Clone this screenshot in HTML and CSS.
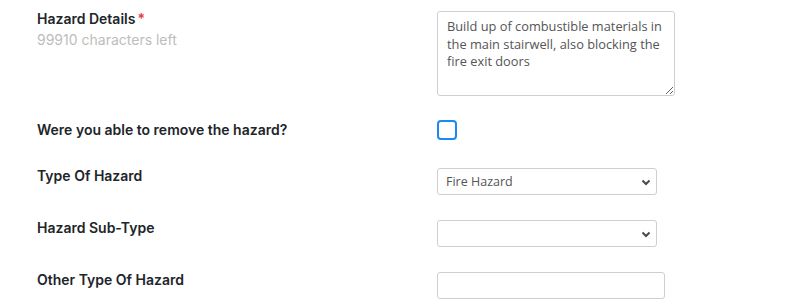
FILE: index.html
```html
<!DOCTYPE html>
<html lang="en">
<head>
  <meta charset="UTF-8" />
  <title>Report Hazard</title>
  <link rel="stylesheet" href="styles.css">
</head>
<body>
  <form class="hazard-form">
    <div class="form-row">
      <div class="label-col">
        <label class="field-label" for="details">Hazard Details<span class="required">*</span></label>
        <div class="char-count">99910 characters left</div>
      </div>
      <textarea id="details" class="field textarea">Build up of combustible materials in the main stairwell, also blocking the fire exit doors</textarea>
    </div>

    <div class="form-row row-center">
      <label class="field-label" for="removed">Were you able to remove the hazard?</label>
      <input type="checkbox" id="removed" class="check">
    </div>

    <div class="form-row">
      <label class="field-label" for="type">Type Of Hazard</label>
      <div class="select-wrap">
        <select id="type" class="field select">
          <option>Fire Hazard</option>
          <option>Trip Hazard</option>
          <option>Electrical Hazard</option>
        </select>
        <svg class="chevron" width="10" height="7" viewBox="0 0 10 7"><path d="M1.5 1.5 L5 5 L8.5 1.5" fill="none" stroke="#4a4a4a" stroke-width="2"/></svg>
      </div>
    </div>

    <div class="form-row">
      <label class="field-label" for="subtype">Hazard Sub-Type</label>
      <div class="select-wrap">
        <select id="subtype" class="field select">
          <option></option>
        </select>
        <svg class="chevron" width="10" height="7" viewBox="0 0 10 7"><path d="M1.5 1.5 L5 5 L8.5 1.5" fill="none" stroke="#4a4a4a" stroke-width="2"/></svg>
      </div>
    </div>

    <div class="form-row">
      <label class="field-label" for="other">Other Type Of Hazard</label>
      <input type="text" id="other" class="field text-input">
    </div>
  </form>
</body>
</html>
```

FILE: styles.css
```css
* {
  box-sizing: border-box;
}

body {
  margin: 0;
  background: #ffffff;
  font-family: Inter, "Open Sans", sans-serif;
}

.hazard-form {
  display: flex;
  flex-direction: column;
  gap: 25px;
  padding: 11px 0 0 37px;
}

.form-row {
  display: grid;
  grid-template-columns: 400px auto;
  align-items: start;
}

.row-center {
  align-items: center;
  margin-top: -1px;
  margin-bottom: 3px;
}

.field-label {
  display: block;
  font-size: 14px;
  font-weight: 600;
  line-height: 16px;
  color: #212529;
}

.required {
  color: #e83a3a;
  margin-left: 2px;
}

.char-count {
  margin-top: 4px;
  font-size: 14px;
  line-height: 18px;
  color: #bdbdbd;
}

.field {
  border: 1px solid #cfcfcf;
  border-radius: 3px;
  background: #fff;
  color: #555;
  font-family: "Open Sans", sans-serif;
  font-size: 12.5px;
}

.textarea {
  width: 238px;
  height: 85px;
  padding: 6px 9px;
  font-size: 12.8px;
  line-height: 17.5px;
  resize: vertical;
}

.check {
  appearance: none;
  margin: 0;
  width: 20px;
  height: 20px;
  border: 2px solid #1e88f0;
  border-radius: 4px;
  background: #fff;
}

.select-wrap {
  position: relative;
  width: 220px;
}

.select {
  appearance: none;
  width: 100%;
  height: 27px;
  padding: 0 24px 0 8px;
}

.chevron {
  position: absolute;
  right: 6px;
  top: 11px;
  pointer-events: none;
}

.text-input {
  width: 228px;
  height: 27px;
  padding: 0 8px;
}
```
